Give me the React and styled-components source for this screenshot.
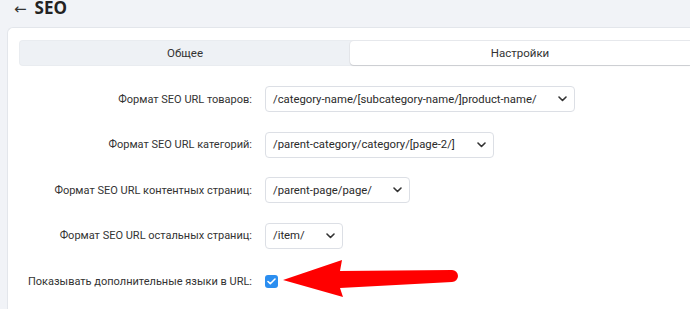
import React from "react";
import styled, { createGlobalStyle } from "styled-components";

const Global = createGlobalStyle`
  html, body { margin: 0; padding: 0; overflow: hidden; }
  body { background: #f1f3f7; font-family: Roboto, "Noto Sans", sans-serif; color: #333; }
`;

const Page = styled.div`
  position: relative;
  width: 690px;
  height: 309px;
  overflow: hidden;
  background: #f1f3f7;
`;

const Header = styled.div`
  box-sizing: border-box;
  height: 27px;
  display: flex;
  align-items: flex-start;
  gap: 8px;
  padding: 2px 0 0 14px;
`;

const Back = styled.span`
  font-family: "DejaVu Sans", sans-serif;
  font-size: 15px;
  line-height: 14px;
  color: #333;
`;

const Title = styled.h1`
  margin: 0;
  font-family: "Open Sans", "Noto Sans", sans-serif;
  font-size: 17px;
  font-weight: 700;
  line-height: 12px;
  color: #222;
`;

const Card = styled.div`
  margin-left: 7px;
  background: #fff;
  border: 1px solid #e3e6eb;
  border-right: none;
  border-radius: 6px 0 0 0;
  padding: 12px 0 30px 11px;
`;

const Tabs = styled.div`
  display: grid;
  grid-template-columns: 330px 1fr;
  height: 24px;
  background: #eef1f5;
  border-radius: 4px 0 0 4px;
  border: 1px solid #e9ecf0;
  border-right: none;
`;

const Tab = styled.div`
  display: flex;
  align-items: center;
  justify-content: center;
  font-size: 11.5px;
  color: #333;
  border-radius: 4px 0 0 4px;
  background: ${(p) => (p.$active ? "#fff" : "transparent")};
  box-shadow: ${(p) => (p.$active ? "0 1px 1px rgba(0,0,0,0.12), 0 0 0 1px #e6e8ec" : "none")};
`;

const Form = styled.div`
  display: grid;
  grid-template-columns: 244px auto;
  column-gap: 13px;
  row-gap: 19.6px;
  grid-auto-rows: 26px;
  padding-top: 20px;
  margin-left: -11px;
`;

const Label = styled.div`
  display: flex;
  align-items: center;
  justify-content: flex-end;
  font-size: 11px;
  color: #333;
  white-space: nowrap;
`;

const Field = styled.div`
  display: flex;
  align-items: center;
`;

const Select = styled.div`
  box-sizing: border-box;
  display: flex;
  align-items: center;
  justify-content: space-between;
  height: 26px;
  width: ${(p) => p.$w}px;
  padding: 0 7px 0 7px;
  border: 1px solid #dcdfe5;
  border-radius: 4px;
  background: #fff;
  font-size: 11.3px;
  color: #2a2a2a;
  white-space: nowrap;
`;

const Check = styled.div`
  width: 13px;
  height: 13px;
  border-radius: 3px;
  background: #2b8ef0;
  display: flex;
  align-items: center;
  justify-content: center;
`;

const Overlay = styled.svg`
  position: absolute;
  left: 0;
  top: 0;
  pointer-events: none;
`;

const Chevron = () => (
  <svg width="9" height="6" viewBox="0 0 9 6">
    <path d="M1 1l3.5 3.5L8 1" fill="none" stroke="#333" strokeWidth="1.6" strokeLinecap="round" strokeLinejoin="round" />
  </svg>
);

const rows = [
  { label: "Формат SEO URL товаров:", value: "/category-name/[subcategory-name/]product-name/", w: 310 },
  { label: "Формат SEO URL категорий:", value: "/parent-category/category/[page-2/]", w: 229 },
  { label: "Формат SEO URL контентных страниц:", value: "/parent-page/page/", w: 145 },
  { label: "Формат SEO URL остальных страниц:", value: "/item/", w: 78 },
];

export default function App() {
  return (
    <Page>
      <Global />
      <Header>
        <Back>←</Back>
        <Title>SEO</Title>
      </Header>
      <Card>
        <Tabs>
          <Tab>Общее</Tab>
          <Tab $active>Настройки</Tab>
        </Tabs>
        <Form>
          {rows.map((r) => (
            <React.Fragment key={r.label}>
              <Label>{r.label}</Label>
              <Field>
                <Select $w={r.w}>
                  <span>{r.value}</span>
                  <Chevron />
                </Select>
              </Field>
            </React.Fragment>
          ))}
          <Label>Показывать дополнительные языки в URL:</Label>
          <Field>
            <Check>
              <svg width="9" height="7" viewBox="0 0 9 7">
                <path d="M1 3.5l2.3 2.2L8 1" fill="none" stroke="#fff" strokeWidth="1.6" strokeLinecap="round" strokeLinejoin="round" />
              </svg>
            </Check>
          </Field>
        </Form>
      </Card>
      <Overlay width="690" height="309" viewBox="0 0 690 309">
        <path d="M283 280 L342 260 L340 271 L452 270 A6 6 0 0 1 452 282 L340 288 L343 297 Z" fill="#f00" />
      </Overlay>
    </Page>
  );
}
